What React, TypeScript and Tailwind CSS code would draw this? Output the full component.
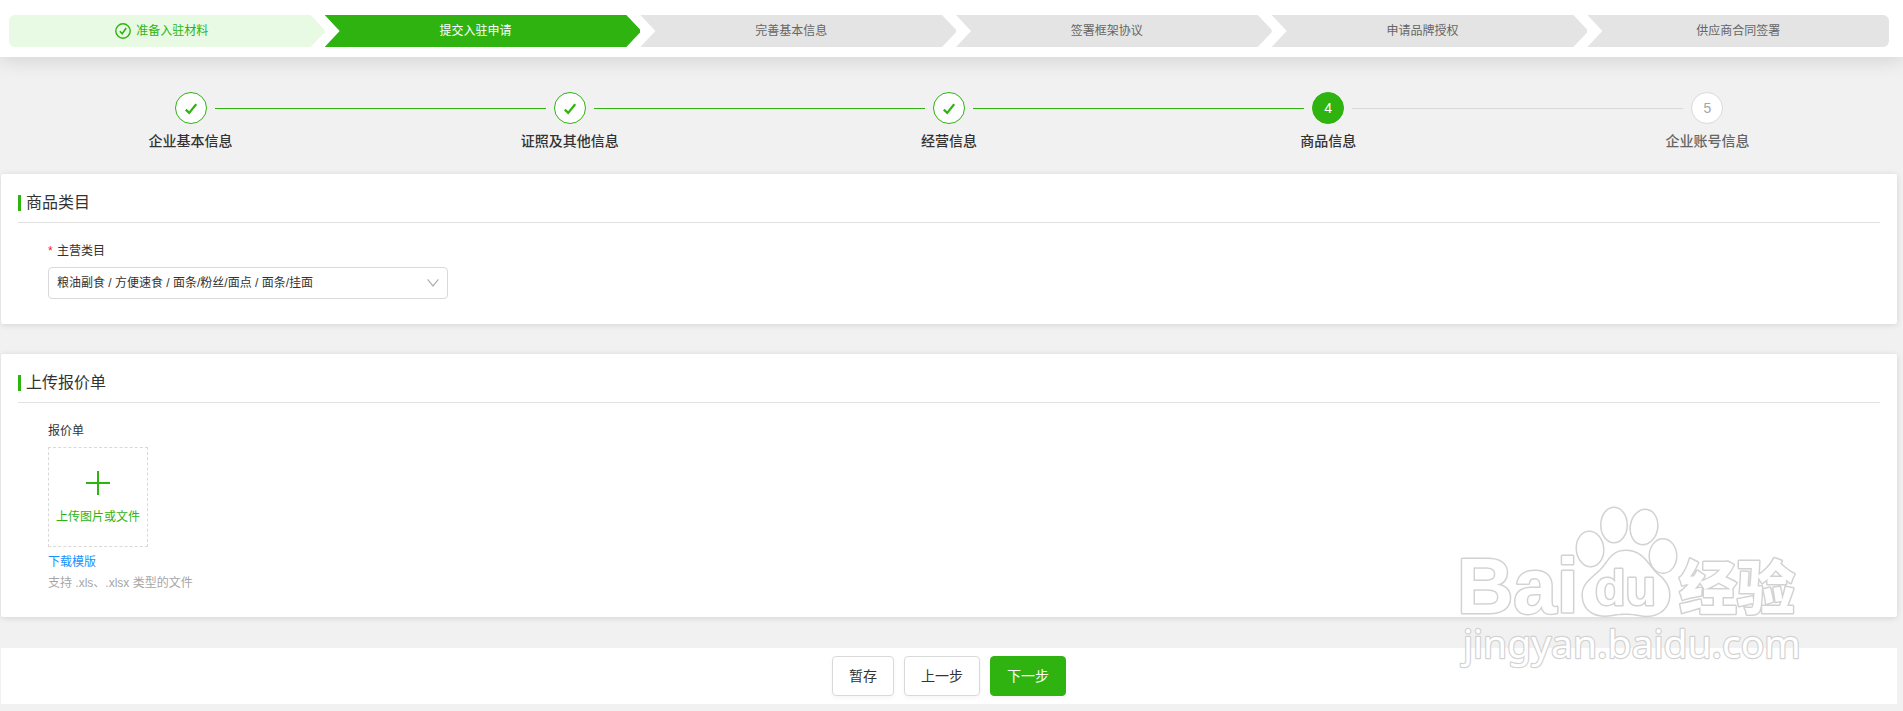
import React from "react";

const phases = ["准备入驻材料", "提交入驻申请", "完善基本信息", "签署框架协议", "申请品牌授权", "供应商合同签署"];
const steps = ["企业基本信息", "证照及其他信息", "经营信息", "商品信息", "企业账号信息"];
const activePhase = 1;
const activeStep = 3;

const middleClip =
  "[clip-path:polygon(0_0,calc(100%-14px)_0,100%_46%,100%_54%,calc(100%-14px)_100%,0_100%,15px_50%)]";
const firstClip = "[clip-path:polygon(0_0,calc(100%-14px)_0,100%_46%,100%_54%,calc(100%-14px)_100%,0_100%)]";
const lastClip = "[clip-path:polygon(0_0,100%_0,100%_100%,0_100%,15px_50%)]";

function PhaseBar() {
  return (
    <header className="relative bg-white pt-[15px] pb-[10px] pl-[9px] shadow-[0_4px_20px_rgba(0,0,0,0.12)]">
      <ol className="flex">
        {phases.map((name, i) => {
          const last = i === phases.length - 1;
          const shape =
            i === 0
              ? `${firstClip} rounded-l-md pr-[10px]`
              : last
                ? `${lastClip} rounded-r-md mr-[14px]`
                : `${middleClip} pr-[14px]`;
          const tone =
            i < activePhase
              ? "bg-[#e8fae4] text-[#2fb310]"
              : i === activePhase
                ? "bg-[#2fb310] text-white"
                : "bg-[#e4e4e4] text-[#666]";
          return (
            <li key={name} className="flex min-w-0 flex-1">
              <div className={`flex h-8 flex-1 items-center justify-center text-xs ${shape} ${tone}`}>
                {i < activePhase && (
                  <svg className="mr-[5px] size-4" viewBox="0 0 16 16" fill="none" stroke="currentColor" strokeWidth="1.4">
                    <circle cx="8" cy="8" r="7.2" />
                    <path d="M4.8 8.2 7.2 10.8 11.2 5" strokeWidth="1.6" />
                  </svg>
                )}
                {name}
              </div>
            </li>
          );
        })}
      </ol>
    </header>
  );
}

function StepCircle({ index }: { index: number }) {
  if (index < activeStep) {
    return (
      <span className="flex size-8 items-center justify-center rounded-full border border-[#2fb310] bg-white text-[#2fb310]">
        <svg className="mt-0.5 size-3" viewBox="0 0 12 12" fill="none" stroke="currentColor" strokeWidth="2.2">
          <path d="M.8 6.6 4.2 9.9 11.2 1.2" />
        </svg>
      </span>
    );
  }
  const tone = index === activeStep ? "border-[#2fb310] bg-[#2fb310] text-white" : "border-[#d9d9d9] bg-white text-[#a6a6a6]";
  return <span className={`flex size-8 items-center justify-center rounded-full border text-sm ${tone}`}>{index + 1}</span>;
}

function Steps() {
  return (
    <ol className="flex pt-[35px] pb-[23px]">
      {steps.map((name, i) => {
        const before = i === 0 ? "bg-transparent" : i <= activeStep ? "bg-[#2fb310]" : "bg-[#d9d9d9]";
        const after = i === steps.length - 1 ? "bg-transparent" : i < activeStep ? "bg-[#2fb310]" : "bg-[#d9d9d9]";
        return (
          <li key={name} className="flex flex-1 flex-col items-center gap-[7px]">
            <div className="flex w-full items-center gap-2">
              <span className={`h-px flex-1 ${before}`} />
              <StepCircle index={i} />
              <span className={`h-px flex-1 ${after}`} />
            </div>
            <span className={`text-sm font-medium leading-5 ${i > activeStep ? "text-[#666]" : "text-[#333]"}`}>{name}</span>
          </li>
        );
      })}
    </ol>
  );
}

function Card({ title, children }: { title: string; children: React.ReactNode }) {
  return (
    <section className="rounded-xs bg-white px-[17px] pt-[17px] shadow-[0_1px_6px_rgba(0,0,0,0.12)]">
      <h2 className="flex items-center gap-[5px] border-b border-[#e1e1e1] pb-[7px] text-base leading-6 text-[#333]">
        <span className="h-4 w-[3px] bg-[#2fb310]" />
        {title}
      </h2>
      <div className="px-[30px] pt-[18px] text-xs leading-5">{children}</div>
    </section>
  );
}

function Watermark() {
  return (
    <svg
      className="pointer-events-none absolute right-[93px] bottom-[26px] h-[185px] w-[360px]"
      viewBox="1450 500 360 185"
      fill="#fff"
      stroke="#d2d2d2"
      strokeWidth="3"
      strokeLinejoin="round"
      paintOrder="stroke"
      role="img"
      aria-label="Baidu 经验 jingyan.baidu.com"
    >
      <text x="1457" y="613" fontSize="78" fontWeight="700" fontFamily="Liberation Sans, Arial, sans-serif">
        Bai
      </text>
      <ellipse cx="1590" cy="549" rx="13" ry="17" transform="rotate(-6 1590 549)" />
      <ellipse cx="1614" cy="525" rx="12.5" ry="17" />
      <ellipse cx="1644" cy="527" rx="13" ry="17" transform="rotate(10 1644 527)" />
      <ellipse cx="1663" cy="556" rx="13" ry="16.5" />
      <path d="M1626 551C1643 551 1648 566 1658 575C1668 583 1671 592 1668 602C1663 615 1650 617 1640 615C1630 613 1621 613 1611 615C1597 617 1584 612 1583 597C1582 584 1591 580 1601 570C1609 562 1611 551 1626 551Z" />
      <text x="1595" y="605" fontSize="50" fontWeight="700" fontFamily="Liberation Sans, Arial, sans-serif">
        du
      </text>
      <text x="1679" y="609" fontSize="58" fontWeight="900" fontFamily="Noto Sans CJK SC, sans-serif">
        经验
      </text>
      <text x="1463" y="658" fontSize="39" fontWeight="400" strokeWidth="2.4" fontFamily="Noto Sans, Open Sans, sans-serif">
        jingyan.baidu.com
      </text>
    </svg>
  );
}

export default function App() {
  const plain = "border border-[#d9d9d9] bg-white text-[#333]";
  const button = "h-10 rounded px-4 text-sm shadow-[0_2px_4px_rgba(0,0,0,0.04)]";
  return (
    <div className="relative min-h-screen bg-[#f1f1f1] pb-[7px] font-['Liberation_Sans','Noto_Sans_CJK_SC',sans-serif] text-[#333]">
      <PhaseBar />
      <main className="flex flex-col pr-1.5 pl-px">
        <Steps />
        <Card title="商品类目">
          <div className="pb-[25px]">
            <label htmlFor="category" className="block">
              <span className="mr-1 inline-block w-[5px] text-[#f5222d]">*</span>
              主营类目
            </label>
            <div className="relative mt-1.5 w-[400px]">
              <select
                id="category"
                className="block h-8 w-full appearance-none rounded border border-[#d9d9d9] bg-white pr-8 pl-2 text-xs text-[#333]"
              >
                <option>粮油副食 / 方便速食 / 面条/粉丝/面点 / 面条/挂面</option>
              </select>
              <svg
                className="pointer-events-none absolute top-2.5 right-[9px] size-3"
                viewBox="0 0 12 12"
                fill="none"
                stroke="#b0b0b0"
                strokeWidth="1.2"
              >
                <path d="M.6 2.4 6 9 11.4 2.4" />
              </svg>
            </div>
          </div>
        </Card>
        <div className="mt-[30px]">
          <Card title="上传报价单">
            <div className="pb-6">
              <p>报价单</p>
              <button
                type="button"
                className="mt-1.5 flex size-[100px] flex-col items-center justify-center gap-3 border border-dashed border-[#d9d9d9] pt-[3px] text-[#2fb310]"
              >
                <svg className="size-6" viewBox="0 0 24 24" stroke="currentColor" strokeWidth="2">
                  <path d="M12 0V24M0 12H24" />
                </svg>
                <span>上传图片或文件</span>
              </button>
              <a href="#template" className="mt-[5px] block w-fit text-[#1890ff]">
                下载模版
              </a>
              <p className="mt-px text-[#a6a6a6]">支持 .xls、.xlsx 类型的文件</p>
            </div>
          </Card>
        </div>
        <footer className="mt-[31px] flex justify-center gap-2.5 bg-white py-2">
          <button type="button" className={`${button} ${plain}`}>
            暂存
          </button>
          <button type="button" className={`${button} ${plain}`}>
            上一步
          </button>
          <button type="button" className={`${button} border border-[#2fb310] bg-[#2fb310] text-white`}>
            下一步
          </button>
        </footer>
      </main>
      <Watermark />
    </div>
  );
}
